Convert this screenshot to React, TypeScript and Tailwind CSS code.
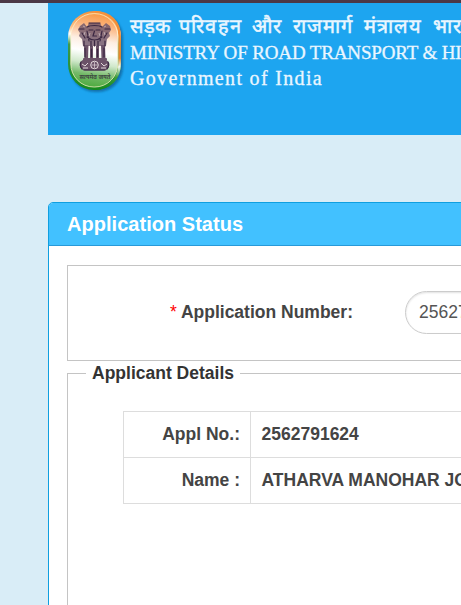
import React from "react";

function Emblem() {
  return (
    <svg width="62" height="90" viewBox="0 0 62 90" className="block shrink-0">
      <defs>
        <linearGradient id="body" x1="0.55" y1="0" x2="0.45" y2="1">
          <stop offset="0" stopColor="#f99a45" />
          <stop offset="0.15" stopColor="#fbb27a" />
          <stop offset="0.36" stopColor="#fdeee2" />
          <stop offset="0.52" stopColor="#ffffff" />
          <stop offset="0.68" stopColor="#d0e8cb" />
          <stop offset="0.84" stopColor="#74b969" />
          <stop offset="1" stopColor="#4eab3f" />
        </linearGradient>
        <linearGradient id="rim" x1="0" y1="0" x2="0" y2="1">
          <stop offset="0" stopColor="#f5913a" />
          <stop offset="0.2" stopColor="#fdc28b" />
          <stop offset="0.29" stopColor="#ffffff" />
          <stop offset="0.42" stopColor="#3f9a4a" />
          <stop offset="1" stopColor="#158a1f" />
        </linearGradient>
        <linearGradient id="edge" x1="0" y1="0" x2="0" y2="1">
          <stop offset="0" stopColor="#f5913a" />
          <stop offset="0.6" stopColor="#e8872d" />
          <stop offset="0.71" stopColor="#f4f7ef" />
          <stop offset="0.85" stopColor="#3f9d3c" />
          <stop offset="1" stopColor="#158a1f" />
        </linearGradient>
        <filter id="soft" x="-20%" y="-20%" width="140%" height="140%">
          <feGaussianBlur stdDeviation="1.3" />
        </filter>
      </defs>
      <rect x="5" y="5" width="53" height="79" rx="25" fill="#0c5c91" opacity="0.7" filter="url(#soft)" />
      <rect x="3" y="3" width="53" height="79" rx="26" fill="url(#rim)" />
      <path d="M30 4.2 C45 4.2 54.6 14 54.6 28 V56 C54.6 70 45 80.8 30 80.8" fill="none" stroke="url(#edge)" strokeWidth="2.6" />
      <rect x="5.8" y="5.6" width="47" height="73.4" rx="23" fill="url(#body)" stroke="#fff3c8" strokeOpacity="0.75" strokeWidth="1" />
      <g fill="#6b5268">
        <path d="M24 15 H35 L37 19 L41 15 L45 18 L46 22 L44 25 L45 28 L42 31 L41 38 H18 L17 31 L14 28 L15 25 L13 22 L15 18 L19 15 L22 19Z" opacity="0.8" />
        <path d="M19 37 H23.5 L23 51 H19.5Z M25 38 H28 V50 H25Z M31 38 H34 V50 H31Z M36 37 H40 L40.5 51 H36.5Z" />
        <rect x="18" y="50" width="24" height="2.5" rx="1" />
        <rect x="15" y="51.5" width="29" height="11" rx="5" />
      </g>
      <g fill="none" stroke="#3a2742" strokeWidth="1.2" strokeLinecap="round">
        <path d="M24 15 H35 M22 19 C25 17 34 17 37 19 M24 22 H28 M31 22 H35 M29.5 23 L28 28 H31.5 M22 29 Q29.5 35 37 29 M22 23 L24 33 M37 23 L35 33 M26 33 V38 M29.5 33 V38 M33 33 V38" />
        <path d="M14 21 H19 M40 21 H45 M17 25 L20 30 M42 25 L39 30 M19 33 V38 M40 33 V38 M20 40 V49 M39 40 V49 M26.5 41 V49 M32.5 41 V49 M16 54 Q14 57 17 61 M43 54 Q45 57 42 61 M19 62 H40" />
      </g>
      <g fill="none" stroke="#eee6e8" strokeWidth="0.9">
        <circle cx="29.5" cy="57" r="3.8" />
        <path d="M29.5 54 V60 M26.5 57 H32.5" strokeWidth="0.6" />
        <path d="M17 56 L20 58 L23 55 M18 60 H23 M36 55 L39 58 L42 56 M36 60 H41" />
        <path d="M18 18 L20 19 M41 18 L39 19 M25 25 L24 28 M34 25 L35 28 M20 24 L19 27 M39 24 L40 27" opacity="0.55" />
      </g>
      <text x="14.5" y="71.3" textLength="31" lengthAdjust="spacingAndGlyphs" fontSize="6.5" fontWeight="700" fill="#3f4a42" fontFamily="'Noto Sans', 'Noto Sans Devanagari', sans-serif">सत्यमेव जयते</text>
    </svg>
  );
}

function DetailRow({ label, value }: { label: string; value: string }) {
  return (
    <tr>
      <th className="h-[46px] w-[127px] border border-[#dddddd] p-0 pr-[10px] text-right font-bold">{label}</th>
      <td className="h-[46px] border border-[#dddddd] p-0 pl-[10.5px] text-left font-bold">{value}</td>
    </tr>
  );
}

export default function App() {
  return (
    <div className="h-[605px] w-[461px] overflow-hidden bg-[#d9edf7] font-['Liberation_Sans',Arial,sans-serif] text-[17.5px] text-[#444444]">
      <div className="h-[3px] bg-[#4b3846]" />
      <div className="ml-12 w-[900px]">
        <header className="flex h-[132px] bg-[#1da5f0] pl-[17px] pt-[5px] text-[#eaf6ff]">
          <Emblem />
          <div className="whitespace-nowrap pl-[3px] font-['Liberation_Serif','Times_New_Roman',serif] [-webkit-text-stroke:0.3px_#eaf6ff]">
            <div className="h-[33px] pt-[5px] text-[20px] leading-[27px] tracking-[1.25px] [-webkit-text-stroke:0.5px_#eaf6ff] [word-spacing:3.7px]">
              <span className="-mr-[1px] tracking-[0px]">सड़क</span> परिवहन और राजमार्ग मंत्रालय भारत सरकार
            </div>
            <div className="h-[24px] text-[19px] leading-[23px] tracking-[-0.14px]">MINISTRY OF ROAD TRANSPORT &amp; HIGHWAYS</div>
            <div className="text-[20px] leading-[26px] tracking-[1.33px]">Government of India</div>
          </div>
        </header>
        <main className="mt-[67px] h-[500px] rounded-t-[5px] border border-[#0f9fe0] bg-white">
          <h1 className="h-[43px] rounded-t-[4px] border-b border-[#2899d8] bg-[#42c1ff] pl-[18px] text-[20px] font-bold leading-[42px] tracking-[0.03px] text-white">
            Application Status
          </h1>
          <div className="pl-[18px] pt-[19px]">
            <section className="flex h-24 items-start border border-[#c4c4c4] pt-[25px]">
              <label className="w-[285px] shrink-0 whitespace-nowrap text-right font-bold leading-[43px]">
                <span className="font-normal text-[#ff0000]">*</span> Application Number:
              </label>
              <input
                readOnly
                value="2562791624"
                className="ml-[52px] h-[43px] w-[300px] rounded-[22px] border border-[#cccccc] px-[13px] text-[17.5px] text-[#555555] shadow-[inset_0_1px_2px_rgba(0,0,0,0.12)] outline-none"
              />
            </section>
            <fieldset className="m-0 h-[300px] border border-[#c4c4c4] pl-[18px]">
              <legend className="h-[25px] px-[6px] font-bold leading-[25px] text-[#333333]">Applicant Details</legend>
              <table className="ml-[37px] mt-[25px] w-[700px] table-fixed border-collapse whitespace-nowrap">
                <tbody>
                  <DetailRow label="Appl No.:" value="2562791624" />
                  <DetailRow label="Name :" value="ATHARVA MANOHAR JOSHI" />
                </tbody>
              </table>
            </fieldset>
          </div>
        </main>
      </div>
    </div>
  );
}
